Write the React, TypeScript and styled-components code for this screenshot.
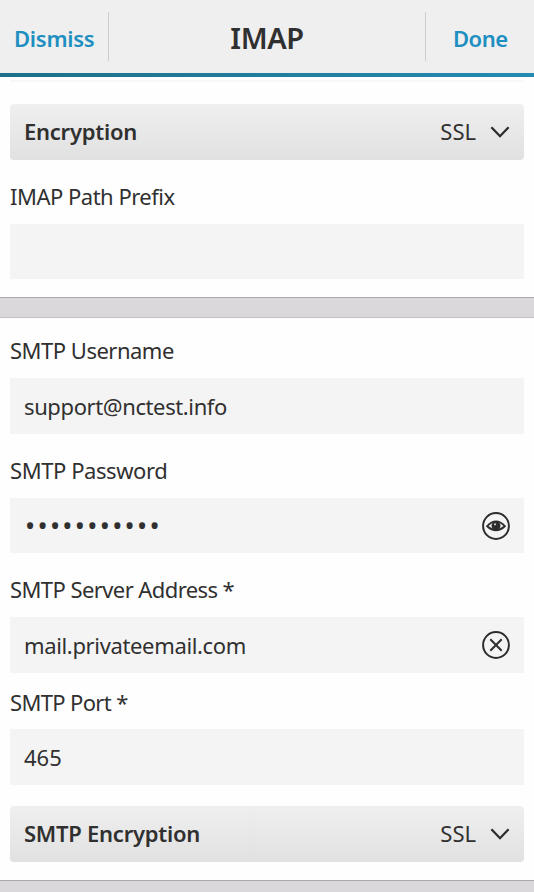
import React from "react";
import styled, { createGlobalStyle } from "styled-components";

const GlobalStyle = createGlobalStyle`
  *, *::before, *::after { box-sizing: border-box; }
  html, body { margin: 0; padding: 0; }
  body {
    height: 892px;
    overflow: hidden;
    background: #fefefe;
    color: #303030;
    font-family: "Noto Sans", "Open Sans", sans-serif;
    font-size: 22px;
  }
`;

const Screen = styled.div`
  height: 892px;
  overflow: hidden;
  display: flex;
  flex-direction: column;
`;

const TitleBar = styled.header`
  flex: none;
  height: 77px;
  display: grid;
  grid-template-columns: 109px 1fr 109px;
  background: linear-gradient(90deg, #1d7088, #258bb2) bottom / 100% 4px no-repeat, #efefef;
  padding-bottom: 4px;
`;

const BarAction = styled.button<{ $side: "left" | "right"; $tracking: number }>`
  height: 49px;
  margin: 12px 0 0;
  padding: 0 0 0 ${(p) => (p.$side === "left" ? 14 : 27)}px;
  border: 0;
  border-${(p) => (p.$side === "left" ? "right" : "left")}: 1px solid #cdcdcd;
  background: none;
  color: #1e8fc0;
  font: 600 22px/52px "Noto Sans", sans-serif;
  letter-spacing: ${(p) => p.$tracking}px;
  text-align: left;
  white-space: nowrap;
`;

const Title = styled.h1`
  margin: 0;
  font-size: 29px;
  line-height: 75px;
  font-weight: 600;
  letter-spacing: -0.4px;
  text-align: center;
`;

const Section = styled.section`
  flex: none;
  display: flex;
  flex-direction: column;
  padding: 0 10px;
`;

const PreviousFieldEdge = styled.div`
  height: 2px;
  margin: 3px 0 22px;
  background: #f8f8f8;
`;

const Dropdown = styled.div<{ $gap?: number }>`
  height: 56px;
  margin-top: ${(p) => p.$gap ?? 0}px;
  padding: 0 14px;
  display: flex;
  align-items: center;
  border-radius: 4px;
  background: linear-gradient(#efefef, #e1e1e1);
`;

const Name = styled.span<{ $tracking: number }>`
  flex: 1;
  padding-bottom: 2px;
  font-weight: 600;
  letter-spacing: ${(p) => p.$tracking}px;
`;

const Choice = styled.span`
  margin-right: 14px;
  padding-bottom: 2px;
`;

const Label = styled.label<{ $top: number; $bottom: number; $tracking: number }>`
  height: 30px;
  line-height: 28px;
  margin: ${(p) => p.$top}px 0 ${(p) => p.$bottom}px;
  letter-spacing: ${(p) => p.$tracking}px;
  white-space: nowrap;
`;

const Field = styled.div<{ $height?: number }>`
  height: ${(p) => p.$height ?? 56}px;
  padding: 0 14px;
  display: flex;
  align-items: center;
  justify-content: space-between;
  background: #f4f4f4;
`;

const Value = styled.span<{ $tracking: number }>`
  letter-spacing: ${(p) => p.$tracking}px;
`;

const MaskedValue = styled.span`
  padding: 0 0 1px 1px;
  font-size: 27px;
  letter-spacing: 2.3px;
`;

const Divider = styled.div`
  flex: none;
  height: 21px;
  margin-top: 18px;
  border-top: 1px solid #aaa6aa;
  border-bottom: 1px solid #c4c0c4;
  background: #dbd8db;
`;

const Glyph = styled.svg`
  display: block;
  flex: none;
  fill: none;
  stroke: #2d2d2d;
`;

const Chevron = () => (
  <Glyph width="20" height="14" viewBox="0 0 20 14" strokeWidth="2.3">
    <path d="M1.4 2.2 10 11.2 18.6 2.2" />
  </Glyph>
);

const EyeIcon = () => (
  <Glyph width="28" height="28" viewBox="0 0 28 28" strokeWidth="2">
    <circle cx="14" cy="14" r="12.9" />
    <path d="M5.2 14.2Q14 4.6 22.8 14.2Q14 22.2 5.2 14.2Z" strokeWidth="1.9" />
    <circle cx="14" cy="13.7" r="4.5" fill="#2d2d2d" stroke="none" />
    <circle cx="13" cy="12.3" r="1.1" fill="#d0d0d0" stroke="none" />
  </Glyph>
);

const ClearIcon = () => (
  <Glyph width="28" height="28" viewBox="0 0 28 28" strokeWidth="2">
    <circle cx="14" cy="14" r="12.9" />
    <path d="M8.3 8.3 19.7 19.7M19.7 8.3 8.3 19.7" />
  </Glyph>
);

export default function App() {
  return (
    <>
      <GlobalStyle />
      <Screen>
        <TitleBar>
          <BarAction $side="left" $tracking={-0.25}>Dismiss</BarAction>
          <Title>IMAP</Title>
          <BarAction $side="right" $tracking={-0.5}>Done</BarAction>
        </TitleBar>
        <Section>
          <PreviousFieldEdge />
          <Dropdown>
            <Name $tracking={-0.25}>Encryption</Name>
            <Choice>SSL</Choice>
            <Chevron />
          </Dropdown>
          <Label $top={22} $bottom={12} $tracking={-0.5}>IMAP Path Prefix</Label>
          <Field $height={55} />
        </Section>
        <Divider />
        <Section>
          <Label $top={18} $bottom={12} $tracking={-0.5}>SMTP Username</Label>
          <Field><Value $tracking={-0.39}>support@nctest.info</Value></Field>
          <Label $top={22} $bottom={12} $tracking={-0.42}>SMTP Password</Label>
          <Field $height={55}>
            <MaskedValue>•••••••••••</MaskedValue>
            <EyeIcon />
          </Field>
          <Label $top={22} $bottom={12} $tracking={-0.58}>SMTP Server Address *</Label>
          <Field>
            <Value $tracking={-0.35}>mail.privateemail.com</Value>
            <ClearIcon />
          </Field>
          <Label $top={15} $bottom={11} $tracking={-0.65}>SMTP Port *</Label>
          <Field><Value $tracking={0}>465</Value></Field>
          <Dropdown $gap={21}>
            <Name $tracking={-0.25}>SMTP Encryption</Name>
            <Choice>SSL</Choice>
            <Chevron />
          </Dropdown>
        </Section>
        <Divider />
      </Screen>
    </>
  );
}
